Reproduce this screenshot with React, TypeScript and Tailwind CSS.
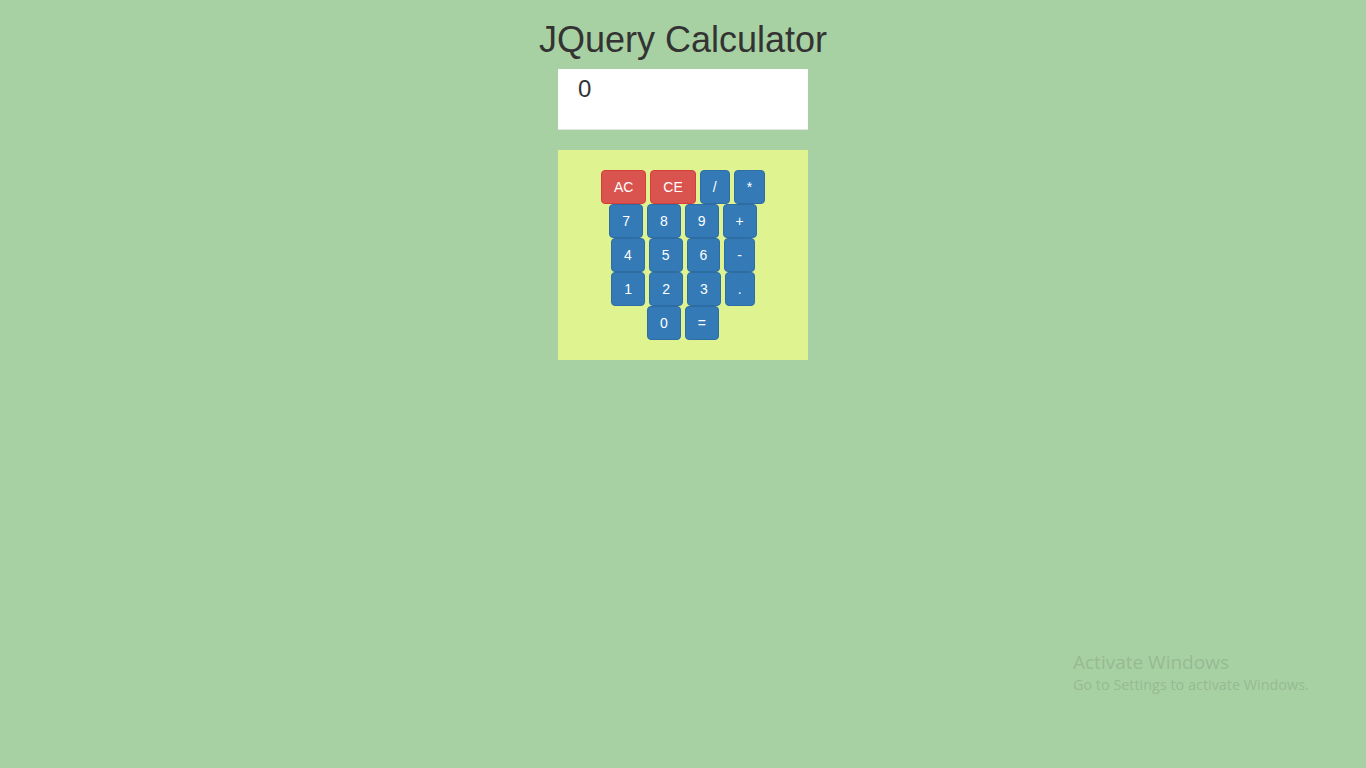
import React from "react";

type Key = { label: string; kind?: "danger" };

const rows: Key[][] = [
  [{ label: "AC", kind: "danger" }, { label: "CE", kind: "danger" }, { label: "/" }, { label: "*" }],
  [{ label: "7" }, { label: "8" }, { label: "9" }, { label: "+" }],
  [{ label: "4" }, { label: "5" }, { label: "6" }, { label: "-" }],
  [{ label: "1" }, { label: "2" }, { label: "3" }, { label: "." }],
  [{ label: "0" }, { label: "=" }],
];

const CalcButton: React.FC<{ k: Key }> = ({ k }) => (
  <button
    className={`h-[34px] min-w-[29px] rounded border px-3 text-[14px] leading-[20px] text-white ${
      k.kind === "danger"
        ? "border-[#d43f3a] bg-[#d9534f]"
        : "border-[#2e6da4] bg-[#337ab7]"
    }`}
  >
    {k.label}
  </button>
);

export default function App() {
  return (
    <div
      className="relative min-h-[768px] w-full bg-[#a8d1a3] text-[#333]"
      style={{ fontFamily: '"Liberation Sans", Arial, sans-serif' }}
    >
      <div className="flex flex-col items-center">
        <h1 className="mt-5 mb-[9px] text-[36px] leading-[40px]">JQuery Calculator</h1>

        <div className="h-[61px] w-[250px] border-b border-[#e5e5e5] bg-white pl-5 pt-[4px] text-[24px] leading-[32px]">
          0
        </div>

        <div className="mt-5 flex w-[250px] flex-col items-center bg-[#dff490] py-5">
          {rows.map((row, i) => (
            <div key={i} className="flex gap-1">
              {row.map((k) => (
                <CalcButton key={k.label} k={k} />
              ))}
            </div>
          ))}
        </div>
      </div>

      {/* windows watermark */}
      <div
        className="absolute left-[1073px] top-[650px] text-[#97b994]"
        style={{ fontFamily: '"Open Sans", "Noto Sans", sans-serif' }}
      >
        <div className="text-[19px] leading-[24px]">Activate Windows</div>
        <div className="text-[14.4px] leading-[22px]">Go to Settings to activate Windows.</div>
      </div>
    </div>
  );
}
